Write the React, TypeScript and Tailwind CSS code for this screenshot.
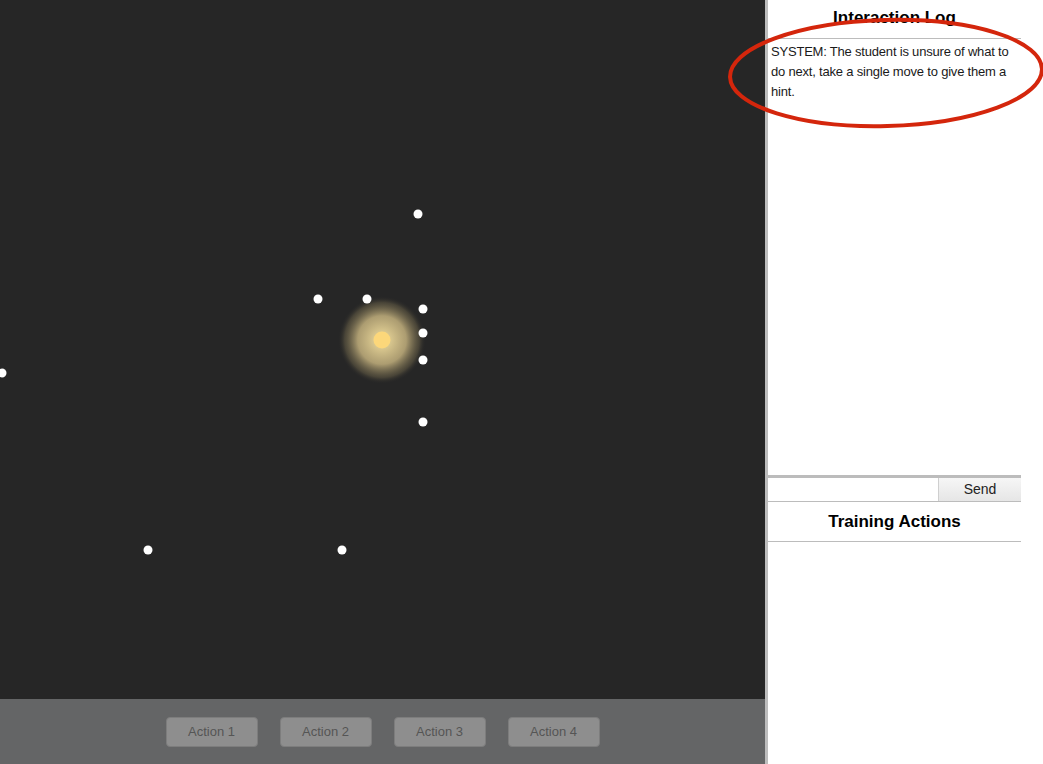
const dots: [number, number][] = [
  [418, 214],
  [318, 299],
  [367, 299],
  [423, 309],
  [423, 333],
  [423, 360],
  [423, 422],
  [2, 373],
  [148, 550],
  [342, 550],
];

const actions = ["Action 1", "Action 2", "Action 3", "Action 4"];

function Scene() {
  return (
    <svg className="h-full w-full" viewBox="0 0 765 699" aria-hidden="true">
      <defs>
        <radialGradient id="glow">
          <stop offset="0%" stopColor="#fde9a6" stopOpacity="0.95" />
          <stop offset="55%" stopColor="#d9c48a" stopOpacity="0.75" />
          <stop offset="85%" stopColor="#8a7d58" stopOpacity="0.35" />
          <stop offset="100%" stopColor="#262626" stopOpacity="0" />
        </radialGradient>
      </defs>
      <circle cx={382} cy={340} r={44} fill="url(#glow)" />
      <circle cx={382} cy={340} r={8.5} fill="#fcd77a" />
      {dots.map(([x, y], i) => (
        <circle key={i} cx={x} cy={y} r={4.5} fill="#ffffff" />
      ))}
    </svg>
  );
}

export default function App() {
  return (
    <div
      className="relative flex h-[764px] w-[1043px] overflow-hidden bg-white"
      style={{ fontFamily: '"Liberation Sans", Arial, sans-serif' }}
    >
      <div className="flex w-[765px] flex-col">
        <div className="flex-1 bg-[#262626]">
          <Scene />
        </div>
        <div className="flex h-[65px] items-center justify-center gap-[22px] bg-[#646566]">
          {actions.map((a) => (
            <button
              key={a}
              type="button"
              className="h-[30px] w-[92px] rounded-[4px] border border-[#7d7d7d] bg-[#8e8e8e] text-[13px] text-[#555]"
            >
              {a}
            </button>
          ))}
        </div>
      </div>

      <div className="w-[3px] bg-[#bdbdbd]" />

      <div className="flex w-[253px] flex-col">
        <div className="flex h-[39px] items-center justify-center border-b border-[#bcbcbc] pb-[2px]">
          <p className="text-[17px] font-bold text-black">Interaction Log</p>
        </div>
        <div className="flex-1 px-[3px] pt-[3px] text-[13px] leading-[20px] tracking-[-0.2px] text-[#1a1a1a]">
          SYSTEM: The student is unsure of what to do next, take a single move to give them a hint.
        </div>
        <div className="flex h-[27px] border-t-[3px] border-b border-[#bcbcbc]">
          <input className="h-full w-0 min-w-0 flex-1 bg-white outline-none" />
          <button
            type="button"
            className="h-full w-[83px] shrink-0 border-l border-[#cfcfcf] bg-gradient-to-b from-[#f6f6f6] to-[#e6e6e6] text-[14px] text-[#222]"
          >
            Send
          </button>
        </div>
        <div className="flex h-[40px] items-center justify-center border-b border-[#bcbcbc]">
          <p className="text-[17px] font-bold text-black">Training Actions</p>
        </div>
        <div className="h-[222px]" />
      </div>

      <div className="flex-1" />

      <svg
        className="pointer-events-none absolute left-[722px] top-[14px]"
        width="324"
        height="120"
        viewBox="0 0 324 120"
        aria-hidden="true"
      >
        <ellipse
          cx={164}
          cy={59}
          rx={156}
          ry={53}
          fill="none"
          stroke="#d4260c"
          strokeWidth={4}
          transform="rotate(-1.5 164 59)"
        />
      </svg>
    </div>
  );
}
